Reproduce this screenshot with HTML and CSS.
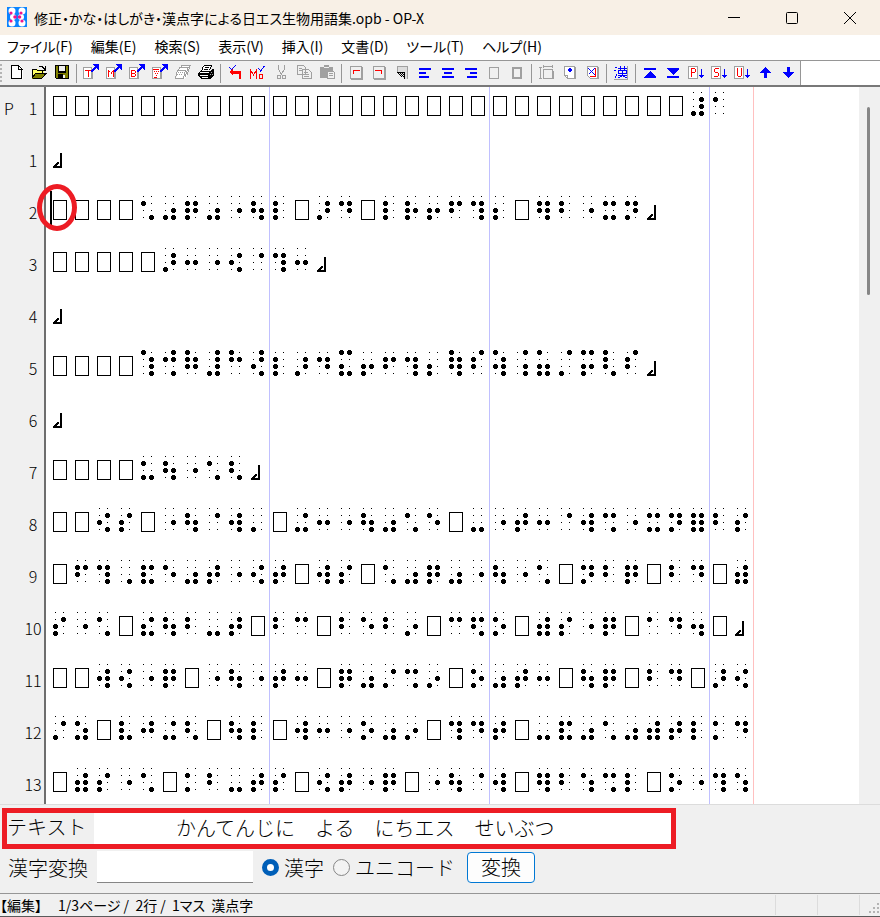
FILE: index.html
```html
<!DOCTYPE html>
<html lang="ja">
<head>
<meta charset="utf-8">
<title>OP-X</title>
<link rel="stylesheet" href="styles.css">
</head>
<body>
<header class="titlebar">
  <svg class="app-icon" width="20" height="20" viewBox="0 0 20 20"><path fill="#0a84ff" d="M0 0h20v20H0z"/><g fill="#fff"><circle cx="5" cy="4" r="3.5"/><circle cx="15" cy="4" r="3.5"/><circle cx="5" cy="16" r="3.5"/><circle cx="15" cy="16" r="3.5"/><circle cx="6" cy="10" r="3"/><circle cx="14" cy="10" r="3"/></g><g fill="#f0148c"><circle cx="4" cy="6" r="1.6"/><circle cx="14" cy="6" r="1.6"/><circle cx="8" cy="10" r="1.8"/><circle cx="12.5" cy="10" r="1.8"/><circle cx="4" cy="14" r="1.6"/><circle cx="15" cy="14" r="1.6"/></g></svg>
  <h1 class="title">修正・かな・はしがき・漢点字による日エス生物用語集.opb - OP-X</h1>
  <div class="window-buttons">
    <button type="button" aria-label="最小化"><svg width="12" height="12" viewBox="0 0 12 12"><path d="M0 5.5h12"/></svg></button>
    <button type="button" aria-label="最大化"><svg width="12" height="12" viewBox="0 0 12 12"><rect x=".5" y=".5" width="11" height="11" rx="1"/></svg></button>
    <button type="button" aria-label="閉じる"><svg width="12" height="12" viewBox="0 0 12 12"><path d="M0 0l12 12M12 0L0 12"/></svg></button>
  </div>
</header>
<nav class="menubar">
  <button type="button">ファイル(F)</button>
  <button type="button">編集(E)</button>
  <button type="button">検索(S)</button>
  <button type="button">表示(V)</button>
  <button type="button">挿入(I)</button>
  <button type="button">文書(D)</button>
  <button type="button">ツール(T)</button>
  <button type="button">ヘルプ(H)</button>
</nav>
<div class="toolbar-row"><div class="toolbar" id="toolbar"></div></div>
<main class="editor">
  <ol class="lines" id="lines"></ol>
  <div class="scrollbar"><div class="thumb"></div></div>
</main>
<section class="panel">
  <div class="text-row">
    <label for="reading">テキスト</label>
    <input id="reading" type="text" readonly value="　　　　かんてんじに　よる　にちエス　せいぶつ">
  </div>
  <form class="convert-row">
    <label for="kanji">漢字変換</label>
    <input id="kanji" class="kanji-input" type="text">
    <label class="choice"><input type="radio" name="mode" checked><span>漢字</span></label>
    <label class="choice"><input type="radio" name="mode"><span>ユニコード</span></label>
    <button type="button">変換</button>
  </form>
</section>
<footer class="statusbar">
  <span class="status-mode">【編集】</span><span class="status-text">1/3ページ / &nbsp;2行 / &nbsp;1マス&nbsp; 漢点字</span>
  <span class="pane"></span><span class="pane"></span>
  <span class="pane grip"><svg width="12" height="12" viewBox="0 0 12 12" fill="#b4b4b4"><path d="M9 0h2v2H9zM9 4h2v2H9zM5 4h2v2H5zM9 8h2v2H9zM5 8h2v2H5zM1 8h2v2H1z"/></svg></span>
</footer>
<script src="app.js"></script>
</body>
</html>
```
FILE: styles.css
```css
* { box-sizing: border-box; }
html, body { height: 100%; }
body {
  margin: 0;
  display: flex;
  flex-direction: column;
  overflow: hidden;
  background: #f0f0f0;
  color: #000;
  font-family: "Noto Sans CJK JP", sans-serif;
  font-size: 14px;
}
button, input { font: inherit; color: inherit; }
button { border: 0; padding: 0; background: none; }
svg { display: block; flex: none; }

.titlebar {
  flex: none;
  display: flex;
  align-items: center;
  height: 35px;
  padding-left: 7px;
  background: #f8f0e6;
}
.title {
  flex: 1;
  margin: 0 0 0 7px;
  font-size: 14px;
  font-weight: 400;
  line-height: 32px;
  white-space: nowrap;
  font-feature-settings: "palt";
}
.app-icon { margin-bottom: 2px; }
.window-buttons { display: flex; margin-right: 1px; }
.window-buttons button {
  display: grid;
  place-items: center;
  width: 58px;
  height: 32px;
}
.window-buttons svg { fill: none; stroke: #000; }

.menubar {
  flex: none;
  display: flex;
  align-items: flex-start;
  gap: 18px;
  height: 25px;
  padding-left: 7px;
  background: #fff;
  font-feature-settings: "palt";
}
.menubar button { white-space: nowrap; line-height: 23px; }

.toolbar-row {
  flex: none;
  height: 27px;
  background: #fff;
  border-top: 1px solid #969696;
  border-bottom: 2px solid #787878;
}
.toolbar {
  display: flex;
  width: max-content;
  height: 24px;
  padding-left: 5px;
  background: #f0f0f0;
  border-right: 1px solid #969696;
  position: relative;
}
.toolbar::before {
  content: "";
  position: absolute;
  left: 0;
  top: 3px;
  height: 18px;
  border-left: 2px dotted #b4b4b4;
}
.toolbar button { width: 23px; height: 23px; }
.toolbar .separator {
  width: 4px;
  border-left: 1px solid #969696;
  margin: 3px 0 2px 2px;
}

.editor {
  flex: 1;
  min-height: 0;
  display: flex;
  overflow: hidden;
  background: #fff;
}
.lines {
  flex: 1;
  margin: 0;
  padding: 0;
  list-style: none;
}
.line {
  display: flex;
  height: 52px;
  position: relative;
}
.gutter {
  flex: none;
  display: grid;
  grid-template-columns: 22px 22px;
  width: 46px;
  background: #f0f0f0;
  border-right: 2px solid #6e6e6e;
  font-size: 16px;
  font-weight: 300;
  line-height: 42px;
}
.gutter span { padding-left: 4px; }
.gutter b { font-weight: 300; text-align: center; }
.cells {
  margin-left: 3px;
  background:
    linear-gradient(#c0c0ff, #c0c0ff) 220px 0 / 1px 100% no-repeat,
    linear-gradient(#c0c0ff, #c0c0ff) 440px 0 / 1px 100% no-repeat,
    linear-gradient(#c0c0ff, #c0c0ff) 660px 0 / 1px 100% no-repeat,
    linear-gradient(#ffc0c0, #ffc0c0) 704px 0 / 1px 100% no-repeat;
}
.caret {
  position: absolute;
  left: 50px;
  top: 0;
  width: 2px;
  height: 34px;
  background: #000;
}
.mark {
  position: absolute;
  left: 37px;
  top: -7px;
  width: 40px;
  height: 47px;
  border: 5px solid #ed1c24;
  border-radius: 50%;
}
.scrollbar {
  flex: none;
  width: 21px;
  padding: 20px 0 0 8px;
  background: #f0f0f0;
}
.thumb {
  width: 3px;
  height: 188px;
  border-radius: 2px;
  background: #868686;
}

.panel {
  flex: none;
  height: 89px;
  padding: 3px 0 0 2px;
  border-top: 1px solid #dcdcdc;
  font-size: 20px;
  font-weight: 300;
}
.text-row {
  display: flex;
  width: 674px;
  max-width: 100%;
  height: 41px;
  border: 5px solid #ed1c24;
}
.text-row label { width: 87px; line-height: 28px; }
.text-row input {
  flex: 1;
  min-width: 0;
  border: 0;
  padding: 0 2px 2px;
  background: #fff;
  outline: 0;
}
.convert-row {
  display: flex;
  align-items: center;
  height: 36px;
  padding-left: 6px;
}
.convert-row > button {
  width: 68px;
  height: 31px;
  margin-left: 3px;
  border: 1px solid #0078d4;
  border-radius: 4px;
  background: #fdfdfd;
  line-height: 28px;
}
.kanji-input {
  width: 156px;
  height: 32px;
  margin: 0 9px;
  border: 0;
  border-bottom: 1px solid #868686;
  background: #fff;
}
.choice { display: flex; align-items: center; gap: 5px; margin-right: 9px; }
.choice input {
  appearance: none;
  width: 17px;
  height: 17px;
  margin: 0;
  border: 1px solid #868686;
  border-radius: 50%;
  background: #f3f3f3;
}
.choice input:checked { border: 5px solid #005fb8; background: #fff; }

.statusbar {
  flex: none;
  display: flex;
  align-items: center;
  height: 24px;
  border-top: 1px solid #969696;
  border-bottom: 1px solid #5a5a5a;
  font-feature-settings: "palt";
  white-space: nowrap;
}
.status-mode { width: 58px; }
.status-text { flex: 1; }
.pane { width: 42px; height: 20px; border-left: 1px solid #dcdcdc; }
.grip { width: 21px; padding: 8px 0 0 8px; }
```
FILE: app.js
```js
// One entry per line: page marker, number, cells.
// A cell is two hex digits, the left and right dot columns (8 = top dot, 1 = bottom dot).
// "#" is a blank cell, "/" the end of a paragraph.
const lines = [
  ["P", 1, "# ".repeat(29) + "17 40"],
  ["", 1, "/"],
  ["", 2, "# # # # 41 13 76 13 02 63 70 # 16 46 # 70 72 32 64 47 30 # 67 60 02 55 56 /"],
  ["", 3, "# # # # # 16 22 02 25 04 47 22 /"],
  ["", 4, "/"],
  ["", 5, "# # # # 87 4D E6 1F C4 2D 70 16 46 B9 32 64 47 30 E7 68 A7 0B B3 18 BA E1 68 /"],
  ["", 6, "/"],
  ["", 7, "# # # # 51 63 02 41 61 /"],
  ["", 8, "# # 25 34 # 02 63 04 27 10 # 15 22 02 63 13 41 42 # 11 02 36 22 04 27 45 02 55 56 77 60 34"],
  ["", 9, "# 64 47 01 75 42 13 36 02 25 36 # 27 34 # 41 13 76 13 02 63 02 41 # 56 60 76 # 60 46 # 37"],
  ["", 10, "34 02 41 # 35 63 60 11 36 # 60 44 # 60 42 60 12 # 44 65 52 # 37 34 02 76 # 40 46 23 # /"],
  ["", 11, "# # 27 25 02 76 # 02 63 02 36 22 # 76 13 14 45 12 # 52 13 36 22 # 63 76 # 60 46 # 16 25"],
  ["", 12, "14 53 # 71 26 15 61 # 63 70 # 27 22 02 52 13 12 # 47 46 36 # 11 75 13 41 13 37 36 70 50 46"],
  ["", 13, "# 37 34 02 41 # 50 60 11 36 34 # 25 36 02 76 # 02 63 04 27 # 67 60 43 45 70 # 52 02 47 43"],
];

function drawCell(cell, index) {
  const x = index * 22 + 4;
  if (cell === "#") {
    return `<path fill="none" stroke="#000" d="M${x + 0.5} 9.5h13v19h-13z"/>`;
  }
  if (cell === "/") {
    return `<path d="M${x + 7} 14h2v15h-9v-2h1v-1h1v-1h1v-1h1v-1h2v2h-1v1h-1v1h3z"/>`;
  }
  let d = "";
  [...cell].forEach((digit, column) => {
    const bits = parseInt(digit, 16);
    for (let row = 0; row < 4; row++) {
      const cx = x + 2 + column * 8;
      const cy = 5 + row * 7;
      d += bits & (8 >> row)
        ? `M${cx - 1} ${cy - 2}h3v1h1v3h-1v1h-3v-1h-1v-3h1z`
        : `M${cx} ${cy}h1v1h-1z`;
    }
  });
  return `<path d="${d}"/>`;
}

document.getElementById("lines").innerHTML = lines.map(([page, number, text], i) => {
  const cells = text.trim().split(" ").map(drawCell).join("");
  const cursor = i === 2 ? '<i class="caret"></i><i class="mark"></i>' : "";
  return `<li class="line"><div class="gutter"><span>${page}</span><b>${number}</b></div>` +
    `<svg class="cells" width="705" height="52" shape-rendering="crispEdges">${cells}</svg>${cursor}</li>`;
}).join("");

const GRAY = "#a0a0a0";
const line = (color, d, width = 1) => `<path fill="none" stroke="${color}" stroke-width="${width}" d="${d}"/>`;
const fill = (color, d) => `<path fill="${color}" d="${d}"/>`;
const arrowUp = fill("#00f", "M13 3h6v6h-1l-2-2-3 4h-2v-2l4-3-2-2z");
const page = fill("#fff", "M3 6h9v11H3z") + line(GRAY, "M3.5 6.5h8v11h-8zM12.5 10v8");
const arrowDown = fill("#00f", "M16 8h1v6h2l-2 3h-1l-2-3h2z");
const jumpPage = fill("#fff", "M3 5h9v12H3z") + line(GRAY, "M3.5 5.5h9v12h-9z");
const letters = {
  T: "M5 9.5h6M8 9v7",
  M: "M5.5 16V9M10.5 16V9M6 10.5h1M9 10.5h1M8 11v2",
  B: "M5.5 9v7M5 9.5h4M5 12.5h4M5 15.5h4M9.5 10v2M9.5 13v2",
  P: "M6.5 7v9M6 7.5h4M6 11.5h4M10.5 8v3",
  S: "M7 7.5h4M6.5 8v3M7 11.5h3M10.5 12v3M6 15.5h4",
  U: "M6.5 7v8M10.5 7v8M7 15.5h3",
};

const groups = [
  [
    ["新規", fill("#fff", "M6 4h8l4 4v10H6z") + line("#000", "M6.5 4.5h7l3 3v10h-10zM13.5 4v4h4")],
    ["開く", fill("#ff6", "M4 8h5l1 1h6v4l-5 4H4z") + fill("#808000", "M7 12h12l-5 6H4z") + line("#000", "M4.5 17V8.5h4l1 1h5v2M4.5 17.5h9l5-5.5H8l-4 5M11 5.5h3l3 3M17.5 5v4h-3")],
    ["保存", fill("#000", "M4 4h14v14H5l-1-1z") + fill("#808000", "M5 5h2v7h8V5h2v12H5z") + fill("#f0f0f0", "M8 5h6v5H8zM12 14h2v3h-2z") + fill("#000", "M7 13h5v4H7z")],
  ],
  [
    ["テキスト", page + line("#f00", letters.T) + arrowUp],
    ["M", page + line("#f00", letters.M) + arrowUp],
    ["B", page + line("#f00", letters.B) + arrowUp],
    ["点字", page + line("#f00", "M4 8.5h6M5 10.5h1m1 0h1m1 0h1M6 12.5h1m1 0h1M7 14.5h1M5 16.5h3") + arrowUp],
    ["複数印刷", fill("#fff", "M8 5h10l-3 10-3 3H4l2-9z") + line(GRAY, "M8.5 7l1-2.5h8.5l-3 9.5M6.5 9l1-2.5h8.5l-3 9.5M5.5 9.5h7M6 11.5h1m1 0h1m1 0h1M5 13.5h1m1 0h1m1 0h1M5.5 9l-2 8.5h8l2-8")],
    ["印刷", fill("#fff", "M8 4h8l-2 6H6z") + line("#000", "M8.5 4.5h8l-2 5M8.5 5l-2 5M10 6.5h4M9 8.5h4") + fill("#000", "M5 10h10l2-2h1l1 1v5l-4 4H6l-3-3v-3z") + fill("#fff", "M5 11h9v1H5zM5 14h8v1H5zM7 16h6v1H7z") + fill("#a0a0a0", "M16 11h1v1h-1zM15 13h1v1h-1zM17 13h1v1h-1z")],
  ],
  [
    ["改行", line("#00f", "M5 6l2.5 2.5L12 4") + fill("#f00", "M5 11l4-3v2h8v8h-2v-5H9v1z")],
    ["M確認", line("#f00", "M3.5 18V9l3 5 3-5v9M12.5 13.5h3v4h-3z") + line("#00f", "M11.5 7l2 3 4-5")],
    ["切り取り", line(GRAY, "M8.5 4v4l4 7M14.5 4v4l-4 7M7.5 14.5h3v3h-3zM12.5 14.5h3v3h-3z")],
    ["コピー", line(GRAY, "M4.5 4.5h6l2 2v7h-8zM6 7.5h3M6 9.5h4M9.5 8.5h6l3 3v6h-9zM11 11.5h4M11 13.5h5M11 15.5h5")],
    ["貼り付け", fill(GRAY, "M4 6h4V4h5v2h4v5h-6v6H4z") + fill("#f0f0f0", "M8 6h5v1H8z") + line(GRAY, "M11.5 9.5h5l2 2v6h-7zM13 12.5h4M13 14.5h4")],
  ],
  [
    ["行頭", line(GRAY, "M5.5 5.5h11v12h-11z") + line(GRAY, "M17.5 6v12H6") + line("#f00", "M8.5 13V9.5H15")],
    ["行末", line(GRAY, "M5.5 5.5h11v12h-11z") + line(GRAY, "M17.5 6v12H6") + line("#f00", "M7 9.5h6.5V13")],
    ["頁", fill("#ddd", "M6 5h11v13h-3L6 11z") + line(GRAY, "M6.5 11V5.5h10v12") + fill("#000", "M6 11h8v1H6zM7 12h1v1H7zM9 12h1v1H9zM11 12h1v1h-1zM8 13h1v1H8zM10 13h1v1h-1zM12 13h1v1h-1zM9 14h1v1H9zM11 14h1v1h-1zM10 15h1v1h-1zM12 15h1v1h-1zM13 12h1v6h-1z")],
    ["左揃え", line("#00f", "M5 8h12M5 12h7M5 16h10", 2)],
    ["中央", line("#00f", "M5 8h12M7 12h8M5 16h12", 2)],
    ["右揃え", line("#00f", "M5 8h12M10 12h7M7 16h10", 2)],
    ["枠", line(GRAY, "M6.5 6.5h9v11h-9z")],
    ["太枠", line(GRAY, "M7 7h8v10H7z", 2)],
  ],
  [
    ["寸法", line(GRAY, "M4 6.5h3M5.5 7v10M4 17.5h3M8 5.5h10M8.5 4v3M17.5 4v3M8.5 8.5h9v9h-9zM18.5 10v8")],
    ["点", fill("#fff", "M6 5h10v12H9l-3-3z") + line(GRAY, "M6.5 14V5.5h10v12h-7l-3-3h3v3M17.5 6v12") + fill("#00f", "M11 7h2v1h1v2h-1v1h-2v-1h-1V8h1z")],
    ["削除", fill("#fff", "M6 5h10v12H9l-3-3z") + line(GRAY, "M6.5 14V5.5h10v12h-7l-3-3M17.5 6v12") + line("#00f", "M7 7l7 7M14 7l-6 6") + line("#f00", "M14.5 7v8H9")],
  ],
  [
    ["漢字", line(GRAY, "M4 18.5h13.5V5") + line("#00f", "M5 6l2 1M4 9l2 1M7 13l-2 4M8 7.5h9M10.5 5v4M14.5 5v4M8.5 9.5h8v3h-8zM12.5 9v6M8 14.5h9M12 15l-4 2M13 15l4 2")],
  ],
  [
    ["先頭", fill("#00f", "M5 7h12v2H5zM11 10l6 6v1H5v-1z")],
    ["末尾", fill("#00f", "M5 7h12v1l-6 6-6-6zM5 15h12v2H5z")],
    ["P", jumpPage + line("#f00", letters.P) + arrowDown],
    ["S", jumpPage + line("#f00", letters.S) + arrowDown],
    ["U", jumpPage + line("#f00", letters.U) + arrowDown],
    ["上へ", fill("#00f", "M11 6l6 6h-4v5h-3v-5H5z")],
    ["下へ", fill("#00f", "M10 6h3v5h4l-6 6-6-6h5z")],
  ],
];

document.getElementById("toolbar").innerHTML = groups.map(group =>
  group.map(([name, shapes]) =>
    `<button type="button" aria-label="${name}"><svg width="23" height="23" shape-rendering="crispEdges">${shapes}</svg></button>`
  ).join("")
).join('<span class="separator"></span>');
```
